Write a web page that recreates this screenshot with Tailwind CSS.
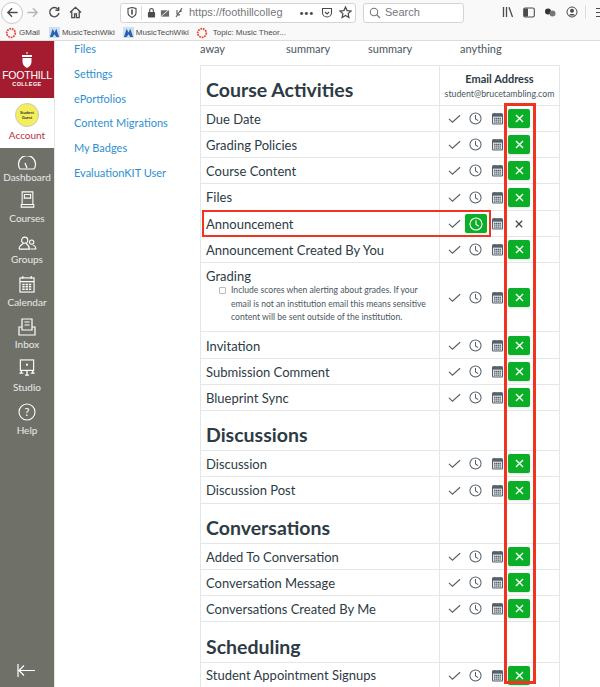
<!DOCTYPE html>
<html><head><meta charset="utf-8"><script src="https://cdn.jsdelivr.net/npm/@tailwindcss/browser@4"></script></head>
<body class="w-[600px] h-[687px] overflow-hidden bg-white font-['Lato',sans-serif] text-[#2d3b45] relative">
<svg class="hidden"><defs>
<symbol id="chk" viewBox="0 0 14 14"><path d="M1 7.5 4.8 11 13 3.5" fill="none" stroke="currentColor" stroke-width="1.2"/></symbol>
<symbol id="clk" viewBox="0 0 14 14"><circle cx="7" cy="7" r="6" fill="none" stroke="currentColor" stroke-width="1.1"/><path d="M7 3.2V7.5L9.8 9.3" fill="none" stroke="currentColor" stroke-width="1.1"/></symbol>
<symbol id="cal" viewBox="0 0 14 14"><rect x="1.6" y="2" width="10.8" height="11" rx="1" fill="#e3e5e6" stroke="currentColor" stroke-width="1.1"/><rect x="2" y="2" width="10" height="3" fill="currentColor"/><path d="M4 1V3M10 1V3" stroke="currentColor"/><path d="M3.3 6.8H10.7M3.3 8.8H10.7M3.3 10.8H10.7" stroke="currentColor" stroke-width="1.3" stroke-dasharray="1.6 .5"/></symbol>
<symbol id="x" viewBox="0 0 14 14"><path d="M2.5 2.5 11.5 11.5M11.5 2.5 2.5 11.5" fill="none" stroke="currentColor" stroke-width="1.7"/></symbol>
<symbol id="ring" viewBox="0 0 14 14"><circle cx="7" cy="7" r="5" fill="none" stroke="#e8412c" stroke-width="2" stroke-dasharray="2 1"/></symbol>
<symbol id="wiki" viewBox="0 0 12 12"><rect width="12" height="12" fill="#cfe0f2"/><path d="M1 11 4 2 6 6 8 2 11 11H8L6 8 4 11Z" fill="#2a62b0"/></symbol>
</defs></svg>

<header class="h-[41px] bg-[#f9f9fa] border-b border-[#dcdcdc] flex flex-col text-[#4a4a4f]">
  <div class="h-[24px] flex items-center overflow-hidden [&>*]:shrink-0">
    <div class="ml-[1px] mt-[1px] w-[22px] h-[22px] rounded-full border border-[#c8c8c8] bg-white flex items-center justify-center">
      <svg class="w-[13px] h-[13px]" viewBox="0 0 14 14"><path d="M12.5 7H2M6.5 2.5 2 7 6.5 11.5" fill="none" stroke="#4a4a4f" stroke-width="1.5"/></svg>
    </div>
    <svg class="w-[13px] h-[13px] ml-[3px]" viewBox="0 0 14 14"><path d="M1.5 7H12M7.5 2.5 12 7 7.5 11.5" fill="none" stroke="#b5b5b8" stroke-width="1.5"/></svg>
    <svg class="w-[13px] h-[13px] ml-[9px]" viewBox="0 0 14 14"><path d="M11.8 7.5A5 5 0 1 1 10.5 3.2M11.5 1V4.5H8" fill="none" stroke="#4a4a4f" stroke-width="1.5"/></svg>
    <svg class="w-[13px] h-[13px] ml-[8px]" viewBox="0 0 14 14"><path d="M1 7 7 1.5 13 7M3 6V12.5H6V8.5H8V12.5H11V6" fill="none" stroke="#4a4a4f" stroke-width="1.4"/></svg>
    <div class="ml-[38px] w-[236px] h-[20px] mt-[1px] bg-white border border-[#d4d4d4] rounded-[3px] flex items-center [&>*]:shrink-0">
      <svg class="w-[10px] h-[11px] ml-[6px]" viewBox="0 0 10 11"><path d="M1 1.5 5 .5 9 1.5V6C9 8.5 5 10.5 5 10.5S1 8.5 1 6Z" fill="none" stroke="#4a4a4f" stroke-width="1.1"/><path d="M5 2.5V7.5" stroke="#4a4a4f" stroke-width="1.6"/></svg>
      <span class="w-px h-[14px] bg-[#ddd] ml-[4px]"></span>
      <svg class="w-[9px] h-[11px] ml-[5px]" viewBox="0 0 10 11"><rect x="1" y="5" width="8" height="6" rx="1" fill="#4a4a4f"/><path d="M3 5V3A2 2 0 0 1 7 3V5" fill="none" stroke="#4a4a4f" stroke-width="1.2"/></svg>
      <svg class="w-[10px] h-[10px] ml-[4px]" viewBox="0 0 11 10"><path d="M1 2H10V9H1Z" fill="#6a6a6e"/><path d="M1 9 10 1" stroke="#f9f9fa" stroke-width="1"/></svg>
      <svg class="w-[10px] h-[11px] ml-[4px]" viewBox="0 0 10 11"><path d="M2 10 8 1M3 3V7C3 8 5 8.5 6 7.5M7 3V5" fill="none" stroke="#5a5a5e" stroke-width="1.1"/></svg>
      <span class="ml-[5px] text-[11px] leading-none text-[#77777b] font-['Liberation_Sans',sans-serif] whitespace-nowrap">https://foothillcolleg</span>
      <span class="ml-auto text-[8px] leading-none tracking-[0.3px]">•••</span>
      <svg class="w-[12px] h-[12px] ml-[7px]" viewBox="0 0 12 12"><path d="M1.5 1.5H10.5V5.5A4.5 4.5 0 0 1 1.5 5.5Z M4 5 6 7 8 5" fill="none" stroke="#4a4a4f" stroke-width="1.1"/></svg>
      <svg class="w-[13px] h-[13px] ml-[6px] mr-[3px]" viewBox="0 0 13 13"><path d="M6.5 1 8.1 4.6 12 5 9.1 7.6 9.9 11.5 6.5 9.5 3.1 11.5 3.9 7.6 1 5 4.9 4.6Z" fill="none" stroke="#4a4a4f" stroke-width="1.2"/></svg>
    </div>
    <div class="ml-[7px] w-[101px] h-[20px] mt-[1px] bg-white border border-[#d4d4d4] rounded-[3px] flex items-center">
      <svg class="w-[12px] h-[12px] ml-[5px]" viewBox="0 0 12 12"><circle cx="5" cy="5" r="3.7" fill="none" stroke="#77777b" stroke-width="1.1"/><path d="M7.7 7.7 11 11" stroke="#77777b" stroke-width="1.2"/></svg>
      <span class="ml-[4px] text-[11px] leading-none text-[#77777b] font-['Liberation_Sans',sans-serif]">Search</span>
    </div>
    <svg class="w-[12px] h-[12px] ml-[38px]" viewBox="0 0 12 12"><path d="M1.5 1V11M4.5 1V11M7 1.2 10.5 11" fill="none" stroke="#4a4a4f" stroke-width="1.3"/></svg>
    <svg class="w-[12px] h-[11px] ml-[9px]" viewBox="0 0 12 11"><rect x=".7" y="1" width="10.6" height="9" rx="1.5" fill="none" stroke="#4a4a4f" stroke-width="1.1"/><rect x="1" y="1.5" width="4" height="8" fill="#4a4a4f"/></svg>
    <svg class="w-[12px] h-[11px] ml-[9px]" viewBox="0 0 12 11"><circle cx="4" cy="4.5" r="3" fill="#333"/><circle cx="8.5" cy="6.5" r="3" fill="#777"/></svg>
    <svg class="w-[12px] h-[12px] ml-[10px]" viewBox="0 0 12 12"><circle cx="6" cy="6" r="5" fill="none" stroke="#4a4a4f"/><circle cx="6" cy="4.8" r="2" fill="#4a4a4f"/><path d="M2.5 9.5C3.5 7.5 8.5 7.5 9.5 9.5Z" fill="#4a4a4f"/></svg>
    <span class="w-px h-[14px] bg-[#ddd] ml-[7px]"></span>
    <span class="ml-[10px] w-[4px] h-[9px] border-y border-[#4a4a4f] flex items-center"><span class="w-full h-px bg-[#4a4a4f]"></span></span>
  </div>
  <div class="flex items-center h-[16px] pt-[1px] text-[8px] leading-none font-['Liberation_Sans',sans-serif] text-[#4a4a4f]">
    <svg class="w-[12px] h-[12px] ml-[5px]"><use href="#ring"/></svg><span class="ml-[2px]">GMail</span>
    <svg class="w-[11px] h-[11px] ml-[9px]"><use href="#wiki"/></svg><span class="ml-[2px]">MusicTechWiki</span>
    <svg class="w-[11px] h-[11px] ml-[8px]"><use href="#wiki"/></svg><span class="ml-[2px]">MusicTechWiki</span>
    <svg class="w-[12px] h-[12px] ml-[7px]"><use href="#ring"/></svg><span class="ml-[5px]">Topic: Music Theor...</span>
  </div>
</header>

<div class="flex h-[646px]">
  <aside class="w-[55px] shrink-0 flex flex-col border-r border-[#e4e4e4]">
    <div class="h-[57px] bg-[#a51c30] flex flex-col items-center text-white pt-[11px]">
      <svg class="w-[12px] h-[16px] shrink-0" viewBox="0 0 12 16"><path d="M5.5 0H6.5V2H5.5ZM1 3H11V5H1ZM1.5 6H10.5V10C10.5 13 8 15 6 16 4 15 1.5 13 1.5 10Z" fill="#fff"/></svg>
      <span class="font-['Liberation_Sans',sans-serif] text-[10.5px] leading-[11px] mt-[2px] tracking-[-0.2px]">FOOTHILL</span>
      <span class="font-['Liberation_Sans',sans-serif] font-bold text-[5.5px] leading-[6px] tracking-[0.4px]">COLLEGE</span>
    </div>
    <div class="h-[50px] bg-white flex flex-col items-center text-[#b5323f]">
      <div class="mt-[5px] w-[24px] h-[24px] rounded-full bg-[#f4ee5a] border border-[#c8c8c8] flex flex-col items-center justify-center text-[4px] leading-[5px] font-bold text-[#333]"><span>Student</span><span>Guest</span></div>
      <span class="text-[10px] leading-[12px] mt-[2px]">Account</span>
    </div>
    <nav class="flex-1 bg-[#6f7169] text-white/85 flex flex-col items-center text-[10px] leading-[12px] relative [&>svg]:shrink-0">
      <svg class="w-[20px] h-[14px] mt-[8px]" viewBox="0 0 20 14"><path d="M3 13A8.5 8.5 0 1 1 17 13ZM10 12 8 7" fill="none" stroke="#fff" stroke-width="1.2"/></svg>
      <span class="mt-[1px]">Dashboard</span>
      <svg class="w-[15px] h-[17px] mt-[8px]" viewBox="0 0 16 19"><path d="M2 15V1H14V15H2ZM1 15H15V18H1ZM4.5 4H11.5V8H4.5Z" fill="none" stroke="#fff" stroke-width="1.2"/></svg>
      <span class="mt-[4px]">Courses</span>
      <svg class="w-[19px] h-[14px] mt-[12px]" viewBox="0 0 20 15"><circle cx="7" cy="4.5" r="3.3" fill="none" stroke="#fff" stroke-width="1.2"/><path d="M1 14C1 10 4 9 5.5 8M8.5 8C10 9 12 10 12 14H1" fill="none" stroke="#fff" stroke-width="1.2"/><circle cx="14.5" cy="6.5" r="2.3" fill="none" stroke="#fff" stroke-width="1.1"/><path d="M13 14H19C19 11 17 10 15.5 9.5" fill="none" stroke="#fff" stroke-width="1.1"/></svg>
      <span class="mt-[3px]">Groups</span>
      <svg class="w-[16px] h-[17px] mt-[11px]" viewBox="0 0 17 18"><rect x="1" y="2" width="15" height="15" fill="none" stroke="#fff" stroke-width="1.2"/><path d="M1 6H16M4 0V3M13 0V3" stroke="#fff" stroke-width="1.2"/><path d="M3.5 9H13.5M3.5 11.5H13.5M3.5 14H13.5" stroke="#fff" stroke-width="1.6" stroke-dasharray="2.5 1"/></svg>
      <span class="mt-[3px]">Calendar</span>
      <svg class="w-[18px] h-[18px] mt-[10px]" viewBox="0 0 18 18"><path d="M4 10V1H14V10M1 9V17H17V9H14V12H4V9ZM6.5 4H11.5M6.5 7H11.5" fill="none" stroke="#fff" stroke-width="1.2"/></svg>
      <span class="mt-[2px]">Inbox</span>
      <svg class="w-[18px] h-[18px] mt-[9px]" viewBox="0 0 18 19"><rect x="2" y="1" width="14" height="11" fill="none" stroke="#fff" stroke-width="1.2"/><rect x="8" y="5" width="2" height="2" fill="#fff"/><path d="M3 12V15M9 12V17M15 12V15M1 15H5M7 17H11M13 15H17" stroke="#fff" stroke-width="1.4"/></svg>
      <span class="mt-[4px]">Studio</span>
      <svg class="w-[18px] h-[18px] mt-[10px]" viewBox="0 0 18 18"><circle cx="9" cy="9" r="8" fill="none" stroke="#fff" stroke-width="1.1"/><text x="9" y="13" text-anchor="middle" font-size="11" fill="#fff" font-family="Lato">?</text></svg>
      <span class="mt-[3px]">Help</span>
      <svg class="absolute left-[17px] bottom-[10px] w-[19px] h-[13px]" viewBox="0 0 19 13"><path d="M18 6.5H2M7 1.5 2 6.5 7 11.5M1 0V13" fill="none" stroke="#fff" stroke-width="1.2"/></svg>
    </nav>
  </aside>

  <div class="w-[145px] shrink-0 pl-[19px] text-[11px] leading-[25px] text-[#2f8fcf] -mt-[5px] flex flex-col items-start">
    <span class="h-[25px]">Files</span>
    <span class="h-[25px]">Settings</span>
    <span class="h-[24px]">ePortfolios</span>
    <span class="h-[25px]">Content Migrations</span>
    <span class="h-[25px]">My Badges</span>
    <span class="h-[25px]">EvaluationKIT User</span>
  </div>

  <main class="w-[360px] shrink-0">
    <div class="h-[24px] flex text-[11px] leading-[15px] text-[#4a5660]">
      <span class="w-[86px]">away</span><span class="w-[82px]">summary</span><span class="w-[92px]">summary</span><span>anything</span>
    </div>
    <div class="border-x border-t border-[#e4e6e8] w-[360px]">
      <div class="flex h-[40px] border-b border-[#e4e6e8]">
        <h2 class="w-[239px] border-r border-[#e4e6e8] pl-[5px] pt-[10px] text-[19.5px] leading-[27px] font-bold">Course Activities</h2>
        <div class="flex-1 flex flex-col items-center pt-[7px] text-[11px] leading-[12px] font-bold">Email Address<span class="font-normal text-[8.75px] leading-[13px] text-[#4a5660] mt-[2px]">student@brucetambling.com</span></div>
      </div>
      <div class="flex h-[26px] border-b border-[#e4e6e8]"><div class="w-[239px] border-r border-[#e4e6e8] pl-[5px] text-[13px] leading-[27px]">Due Date</div><div class="flex items-center pl-[8px] text-[#55606a]"><svg class="w-[13px] h-[13px]"><use href="#chk"/></svg><svg class="w-[13px] h-[13px] ml-[8px]"><use href="#clk"/></svg><svg class="w-[13px] h-[13px] ml-[9px]"><use href="#cal"/></svg><span class="ml-[4px] w-[22px] h-[19px] bg-[#0aaf27] rounded-[2px] shadow-sm text-white flex items-center justify-center"><svg class="w-[11px] h-[11px]"><use href="#x"/></svg></span></div></div>
      <div class="flex h-[26px] border-b border-[#e4e6e8]"><div class="w-[239px] border-r border-[#e4e6e8] pl-[5px] text-[13px] leading-[27px]">Grading Policies</div><div class="flex items-center pl-[8px] text-[#55606a]"><svg class="w-[13px] h-[13px]"><use href="#chk"/></svg><svg class="w-[13px] h-[13px] ml-[8px]"><use href="#clk"/></svg><svg class="w-[13px] h-[13px] ml-[9px]"><use href="#cal"/></svg><span class="ml-[4px] w-[22px] h-[19px] bg-[#0aaf27] rounded-[2px] shadow-sm text-white flex items-center justify-center"><svg class="w-[11px] h-[11px]"><use href="#x"/></svg></span></div></div>
      <div class="flex h-[26px] border-b border-[#e4e6e8]"><div class="w-[239px] border-r border-[#e4e6e8] pl-[5px] text-[13px] leading-[27px]">Course Content</div><div class="flex items-center pl-[8px] text-[#55606a]"><svg class="w-[13px] h-[13px]"><use href="#chk"/></svg><svg class="w-[13px] h-[13px] ml-[8px]"><use href="#clk"/></svg><svg class="w-[13px] h-[13px] ml-[9px]"><use href="#cal"/></svg><span class="ml-[4px] w-[22px] h-[19px] bg-[#0aaf27] rounded-[2px] shadow-sm text-white flex items-center justify-center"><svg class="w-[11px] h-[11px]"><use href="#x"/></svg></span></div></div>
      <div class="flex h-[27px] border-b border-[#e4e6e8]"><div class="w-[239px] border-r border-[#e4e6e8] pl-[5px] text-[13px] leading-[27px]">Files</div><div class="flex items-center pl-[8px] text-[#55606a]"><svg class="w-[13px] h-[13px]"><use href="#chk"/></svg><svg class="w-[13px] h-[13px] ml-[8px]"><use href="#clk"/></svg><svg class="w-[13px] h-[13px] ml-[9px]"><use href="#cal"/></svg><span class="ml-[4px] w-[22px] h-[19px] bg-[#0aaf27] rounded-[2px] shadow-sm text-white flex items-center justify-center"><svg class="w-[11px] h-[11px]"><use href="#x"/></svg></span></div></div>
      <div class="flex h-[26px] border-b border-[#e4e6e8]"><div class="w-[239px] border-r border-[#e4e6e8] pl-[5px] text-[13px] leading-[27px]">Announcement</div><div class="flex items-center pl-[8px] text-[#55606a]"><svg class="w-[13px] h-[13px]"><use href="#chk"/></svg><span class="ml-[4px] w-[22px] h-[19px] bg-[#0aaf27] rounded-[2px] shadow-sm text-white flex items-center justify-center"><svg class="w-[14px] h-[14px]"><use href="#clk"/></svg></span><svg class="w-[13px] h-[13px] ml-[4px]"><use href="#cal"/></svg><span class="ml-[4px] w-[22px] h-[19px] flex items-center justify-center text-[#3a4650]"><svg class="w-[10px] h-[10px]"><use href="#x"/></svg></span></div></div>
      <div class="flex h-[26px] border-b border-[#e4e6e8]"><div class="w-[239px] border-r border-[#e4e6e8] pl-[5px] text-[13px] leading-[27px]">Announcement Created By You</div><div class="flex items-center pl-[8px] text-[#55606a]"><svg class="w-[13px] h-[13px]"><use href="#chk"/></svg><svg class="w-[13px] h-[13px] ml-[8px]"><use href="#clk"/></svg><svg class="w-[13px] h-[13px] ml-[9px]"><use href="#cal"/></svg><span class="ml-[4px] w-[22px] h-[19px] bg-[#0aaf27] rounded-[2px] shadow-sm text-white flex items-center justify-center"><svg class="w-[11px] h-[11px]"><use href="#x"/></svg></span></div></div>
      <div class="flex h-[69px] border-b border-[#e4e6e8]"><div class="w-[239px] border-r border-[#e4e6e8] pl-[5px]"><div class="text-[13px] leading-[27px]">Grading</div><div class="flex text-[8.6px] leading-[13.5px] text-[#4a5660] pl-[13px] -mt-[6px]"><span class="w-[7px] h-[7px] mt-[3px] mr-[5px] shrink-0 border border-[#b5b9bc] rounded-[1px] bg-white"></span><span class="w-[204px]">Include scores when alerting about grades. If your email is not an institution email this means sensitive content will be sent outside of the institution.</span></div></div><div class="flex items-center pl-[8px] text-[#55606a]"><svg class="w-[13px] h-[13px]"><use href="#chk"/></svg><svg class="w-[13px] h-[13px] ml-[8px]"><use href="#clk"/></svg><svg class="w-[13px] h-[13px] ml-[9px]"><use href="#cal"/></svg><span class="ml-[4px] w-[22px] h-[19px] bg-[#0aaf27] rounded-[2px] shadow-sm text-white flex items-center justify-center"><svg class="w-[11px] h-[11px]"><use href="#x"/></svg></span></div></div>
      <div class="flex h-[27px] border-b border-[#e4e6e8]"><div class="w-[239px] border-r border-[#e4e6e8] pl-[5px] text-[13px] leading-[29px]">Invitation</div><div class="flex items-center pl-[8px] text-[#55606a]"><svg class="w-[13px] h-[13px]"><use href="#chk"/></svg><svg class="w-[13px] h-[13px] ml-[8px]"><use href="#clk"/></svg><svg class="w-[13px] h-[13px] ml-[9px]"><use href="#cal"/></svg><span class="ml-[4px] w-[22px] h-[19px] bg-[#0aaf27] rounded-[2px] shadow-sm text-white flex items-center justify-center"><svg class="w-[11px] h-[11px]"><use href="#x"/></svg></span></div></div>
      <div class="flex h-[26px] border-b border-[#e4e6e8]"><div class="w-[239px] border-r border-[#e4e6e8] pl-[5px] text-[13px] leading-[27px]">Submission Comment</div><div class="flex items-center pl-[8px] text-[#55606a]"><svg class="w-[13px] h-[13px]"><use href="#chk"/></svg><svg class="w-[13px] h-[13px] ml-[8px]"><use href="#clk"/></svg><svg class="w-[13px] h-[13px] ml-[9px]"><use href="#cal"/></svg><span class="ml-[4px] w-[22px] h-[19px] bg-[#0aaf27] rounded-[2px] shadow-sm text-white flex items-center justify-center"><svg class="w-[11px] h-[11px]"><use href="#x"/></svg></span></div></div>
      <div class="flex h-[26px] border-b border-[#e4e6e8]"><div class="w-[239px] border-r border-[#e4e6e8] pl-[5px] text-[13px] leading-[27px]">Blueprint Sync</div><div class="flex items-center pl-[8px] text-[#55606a]"><svg class="w-[13px] h-[13px]"><use href="#chk"/></svg><svg class="w-[13px] h-[13px] ml-[8px]"><use href="#clk"/></svg><svg class="w-[13px] h-[13px] ml-[9px]"><use href="#cal"/></svg><span class="ml-[4px] w-[22px] h-[19px] bg-[#0aaf27] rounded-[2px] shadow-sm text-white flex items-center justify-center"><svg class="w-[11px] h-[11px]"><use href="#x"/></svg></span></div></div>
      <div class="flex h-[40px] border-b border-[#e4e6e8]"><h2 class="w-[239px] border-r border-[#e4e6e8] pl-[5px] pt-[10px] text-[19.5px] leading-[27px] font-bold">Discussions</h2></div>
      <div class="flex h-[26px] border-b border-[#e4e6e8]"><div class="w-[239px] border-r border-[#e4e6e8] pl-[5px] text-[13px] leading-[27px]">Discussion</div><div class="flex items-center pl-[8px] text-[#55606a]"><svg class="w-[13px] h-[13px]"><use href="#chk"/></svg><svg class="w-[13px] h-[13px] ml-[8px]"><use href="#clk"/></svg><svg class="w-[13px] h-[13px] ml-[9px]"><use href="#cal"/></svg><span class="ml-[4px] w-[22px] h-[19px] bg-[#0aaf27] rounded-[2px] shadow-sm text-white flex items-center justify-center"><svg class="w-[11px] h-[11px]"><use href="#x"/></svg></span></div></div>
      <div class="flex h-[27px] border-b border-[#e4e6e8]"><div class="w-[239px] border-r border-[#e4e6e8] pl-[5px] text-[13px] leading-[27px]">Discussion Post</div><div class="flex items-center pl-[8px] text-[#55606a]"><svg class="w-[13px] h-[13px]"><use href="#chk"/></svg><svg class="w-[13px] h-[13px] ml-[8px]"><use href="#clk"/></svg><svg class="w-[13px] h-[13px] ml-[9px]"><use href="#cal"/></svg><span class="ml-[4px] w-[22px] h-[19px] bg-[#0aaf27] rounded-[2px] shadow-sm text-white flex items-center justify-center"><svg class="w-[11px] h-[11px]"><use href="#x"/></svg></span></div></div>
      <div class="flex h-[40px] border-b border-[#e4e6e8]"><h2 class="w-[239px] border-r border-[#e4e6e8] pl-[5px] pt-[10px] text-[19.5px] leading-[27px] font-bold">Conversations</h2></div>
      <div class="flex h-[26px] border-b border-[#e4e6e8]"><div class="w-[239px] border-r border-[#e4e6e8] pl-[5px] text-[13px] leading-[27px]">Added To Conversation</div><div class="flex items-center pl-[8px] text-[#55606a]"><svg class="w-[13px] h-[13px]"><use href="#chk"/></svg><svg class="w-[13px] h-[13px] ml-[8px]"><use href="#clk"/></svg><svg class="w-[13px] h-[13px] ml-[9px]"><use href="#cal"/></svg><span class="ml-[4px] w-[22px] h-[19px] bg-[#0aaf27] rounded-[2px] shadow-sm text-white flex items-center justify-center"><svg class="w-[11px] h-[11px]"><use href="#x"/></svg></span></div></div>
      <div class="flex h-[26px] border-b border-[#e4e6e8]"><div class="w-[239px] border-r border-[#e4e6e8] pl-[5px] text-[13px] leading-[27px]">Conversation Message</div><div class="flex items-center pl-[8px] text-[#55606a]"><svg class="w-[13px] h-[13px]"><use href="#chk"/></svg><svg class="w-[13px] h-[13px] ml-[8px]"><use href="#clk"/></svg><svg class="w-[13px] h-[13px] ml-[9px]"><use href="#cal"/></svg><span class="ml-[4px] w-[22px] h-[19px] bg-[#0aaf27] rounded-[2px] shadow-sm text-white flex items-center justify-center"><svg class="w-[11px] h-[11px]"><use href="#x"/></svg></span></div></div>
      <div class="flex h-[26px] border-b border-[#e4e6e8]"><div class="w-[239px] border-r border-[#e4e6e8] pl-[5px] text-[13px] leading-[27px]">Conversations Created By Me</div><div class="flex items-center pl-[8px] text-[#55606a]"><svg class="w-[13px] h-[13px]"><use href="#chk"/></svg><svg class="w-[13px] h-[13px] ml-[8px]"><use href="#clk"/></svg><svg class="w-[13px] h-[13px] ml-[9px]"><use href="#cal"/></svg><span class="ml-[4px] w-[22px] h-[19px] bg-[#0aaf27] rounded-[2px] shadow-sm text-white flex items-center justify-center"><svg class="w-[11px] h-[11px]"><use href="#x"/></svg></span></div></div>
      <div class="flex h-[41px] border-b border-[#e4e6e8]"><h2 class="w-[239px] border-r border-[#e4e6e8] pl-[5px] pt-[11px] text-[19.5px] leading-[27px] font-bold">Scheduling</h2></div>
      <div class="flex h-[26px] border-b border-[#e4e6e8]"><div class="w-[239px] border-r border-[#e4e6e8] pl-[5px] text-[13px] leading-[24px]">Student Appointment Signups</div><div class="flex items-center pl-[8px] text-[#55606a]"><svg class="w-[13px] h-[13px]"><use href="#chk"/></svg><svg class="w-[13px] h-[13px] ml-[8px]"><use href="#clk"/></svg><svg class="w-[13px] h-[13px] ml-[9px]"><use href="#cal"/></svg><span class="ml-[4px] w-[22px] h-[19px] bg-[#0aaf27] rounded-[2px] shadow-sm text-white flex items-center justify-center"><svg class="w-[11px] h-[11px]"><use href="#x"/></svg></span></div></div>
    </div>
  </main>
</div>

<div class="absolute left-[504px] top-[103px] w-[32px] h-[581px] border-[3px] border-[#f0341f]"></div>
<div class="absolute left-[202px] top-[210px] w-[289px] h-[27px] border-[2px] border-[#f0341f]"></div>
</body></html>
